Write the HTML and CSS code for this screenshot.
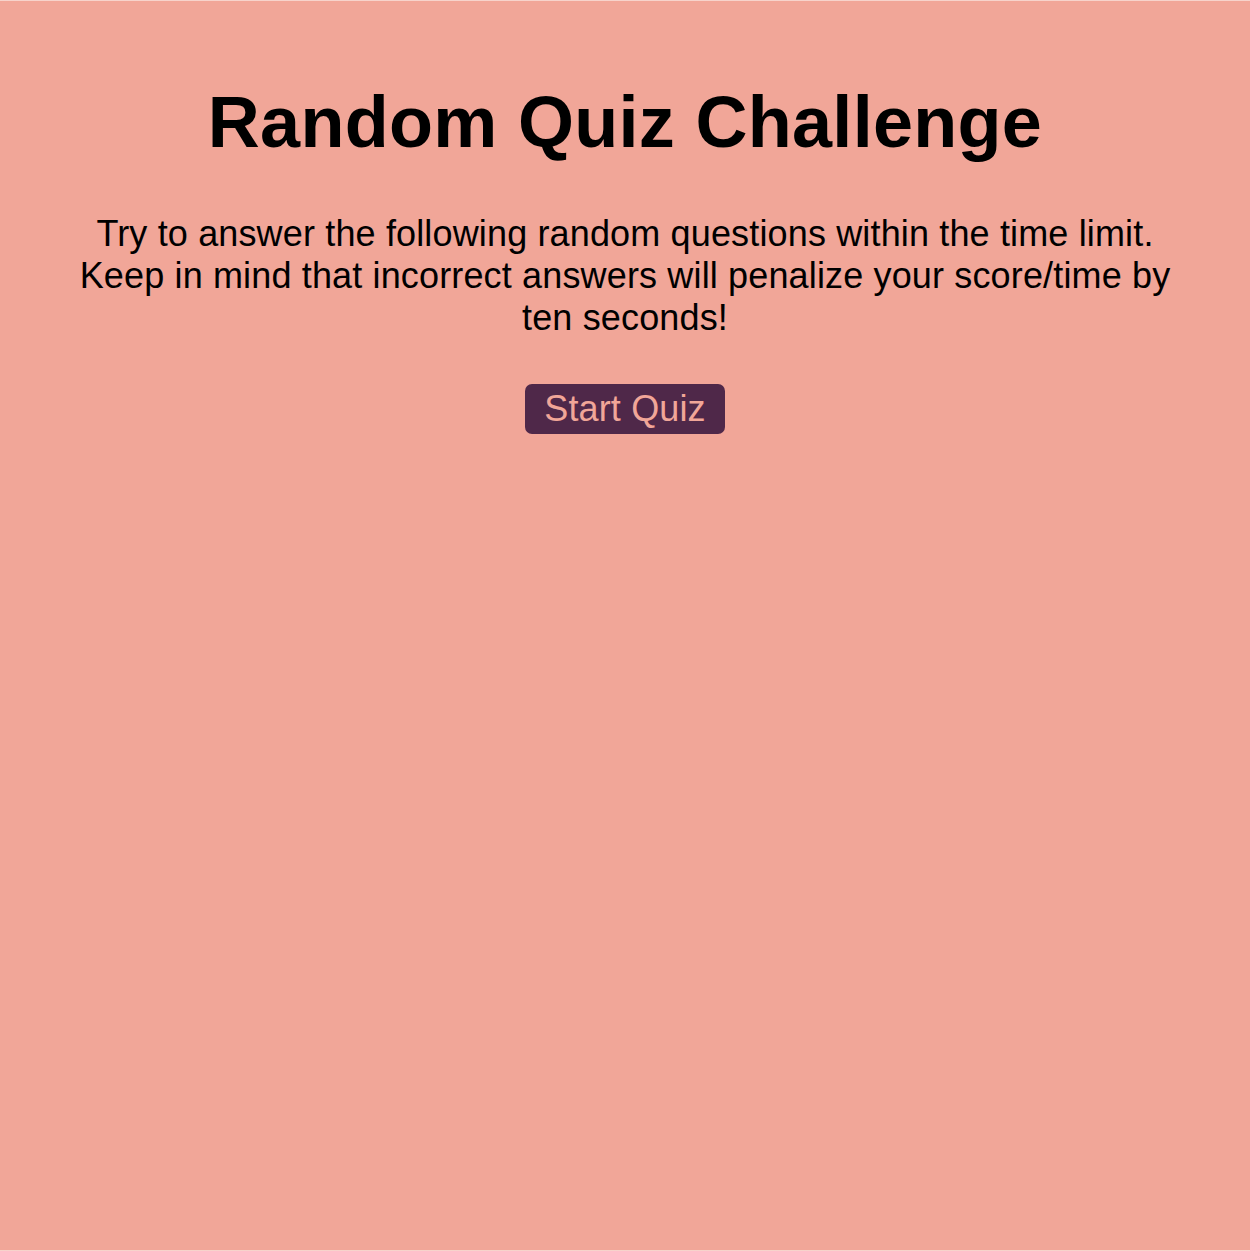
FILE: index.html
```html
<!DOCTYPE html>
<html lang="en">
<head>
<meta charset="utf-8">
<title>Random Quiz Challenge</title>
<link rel="stylesheet" href="styles.css">
</head>
<body>
<main class="intro">
  <h1 class="intro-title">Random Quiz Challenge</h1>
  <p class="intro-text">Try to answer the following random questions within the time limit. Keep in mind that incorrect answers will penalize your score/time by ten seconds!</p>
  <button class="start-btn" type="button">Start Quiz</button>
</main>
</body>
</html>
```
FILE: styles.css
```css
html {
  background: #f1a698;
  border-top: 1px solid #f7d3cb;
  border-bottom: 1px solid #f7d3cb;
  height: 1249px;
}
body {
  margin: 0;
  font-family: "Liberation Sans", Arial, sans-serif;
  font-size: 36px;
  color: #000;
}
.intro {
  display: flex;
  flex-direction: column;
  align-items: center;
  padding-top: 80px;
  text-align: center;
}
.intro-title {
  margin: 0 0 50px;
  font-size: 72px;
  font-weight: bold;
  letter-spacing: 0.3px;
}
.intro-text {
  margin: 0 0 45px;
  max-width: 1120px;
  letter-spacing: 0.15px;
}
.start-btn {
  font-family: inherit;
  font-size: 36px;
  color: #f1a698;
  background: #4f2849;
  border: none;
  border-radius: 7px;
  padding: 4px 19px;
  line-height: normal;
  letter-spacing: 0.15px;
  cursor: pointer;
}
```
